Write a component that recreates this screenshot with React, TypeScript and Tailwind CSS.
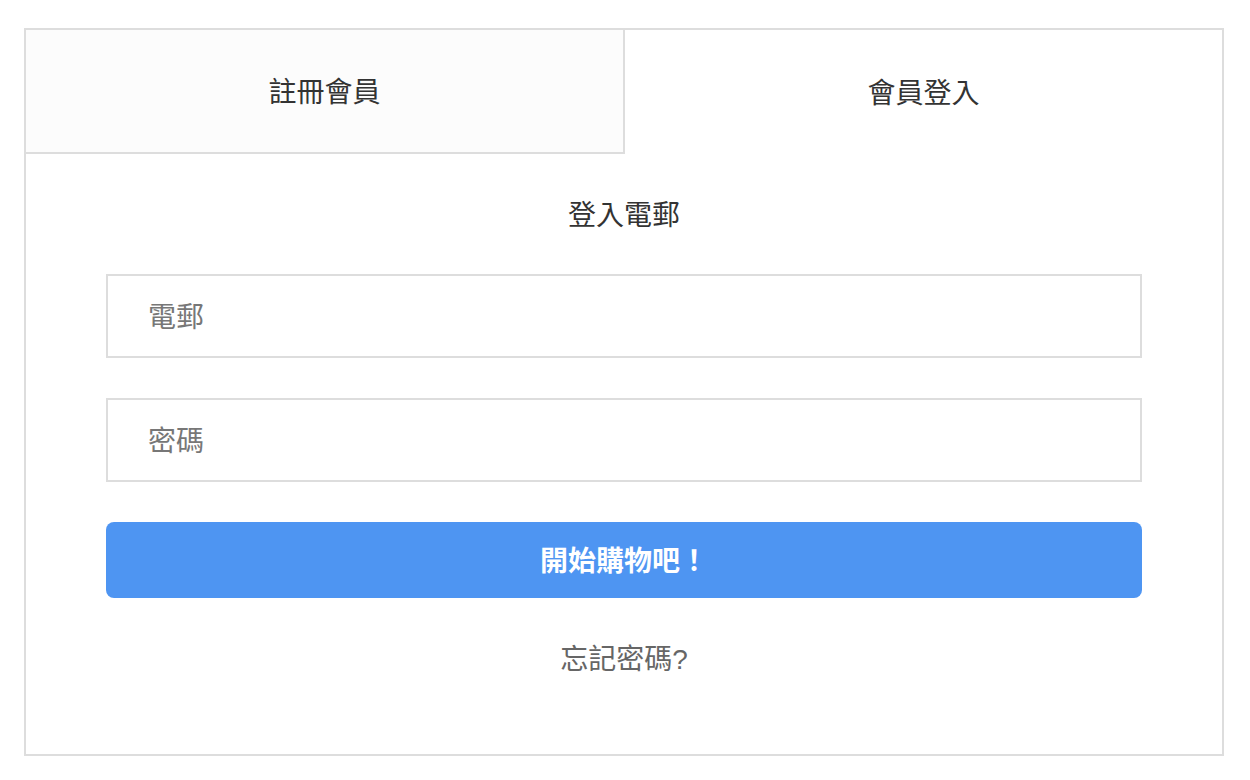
import { useState } from 'react';

const font = { fontFamily: '"Liberation Sans", "Noto Sans CJK TC", sans-serif' };

export default function App() {
  const [tab, setTab] = useState<'register' | 'login'>('login');

  return (
    <div className="min-h-screen bg-white pt-7 pl-6" style={font}>
      <div className="w-[1200px] h-[728px] border-2 border-[#dddddd] flex flex-col">
        {/* Tabs */}
        <div className="flex h-[124px]">
          <button
            onClick={() => setTab('register')}
            className={`flex-1 flex items-center justify-center pt-1 text-[28px] text-[#333333] ${
              tab === 'register' ? 'bg-white' : 'bg-[#fcfcfc] border-b-2 border-r-2 border-[#dddddd]'
            }`}
          >
            註冊會員
          </button>
          <button
            onClick={() => setTab('login')}
            className={`flex-1 flex items-center justify-center pt-1 text-[28px] text-[#333333] ${
              tab === 'login' ? 'bg-white' : 'bg-[#fcfcfc] border-b-2 border-l-2 border-[#dddddd]'
            }`}
          >
            會員登入
          </button>
        </div>

        {/* Login form */}
        <div className="flex flex-col px-20 pt-[42px]">
          <h2 className="text-center text-[28px] leading-10 h-10 text-[#333333]">登入電郵</h2>

          <input
            type="email"
            placeholder="電郵"
            className="mt-[38px] h-[84px] border-2 border-[#dddddd] px-10 pt-1 text-[28px] text-[#333333] placeholder:text-[#777777] outline-none"
          />
          <input
            type="password"
            placeholder="密碼"
            className="mt-10 h-[84px] border-2 border-[#dddddd] px-10 pt-1 text-[28px] text-[#333333] placeholder:text-[#777777] outline-none"
          />

          <button className="mt-10 h-[76px] rounded-lg bg-[#4e95f2] pt-1 text-white text-[28px] font-bold">
            開始購物吧！
          </button>

          <a href="#" className="mt-[42px] text-center text-[28px] leading-10 text-[#666666]">
            忘記密碼?
          </a>
        </div>
      </div>
    </div>
  );
}
